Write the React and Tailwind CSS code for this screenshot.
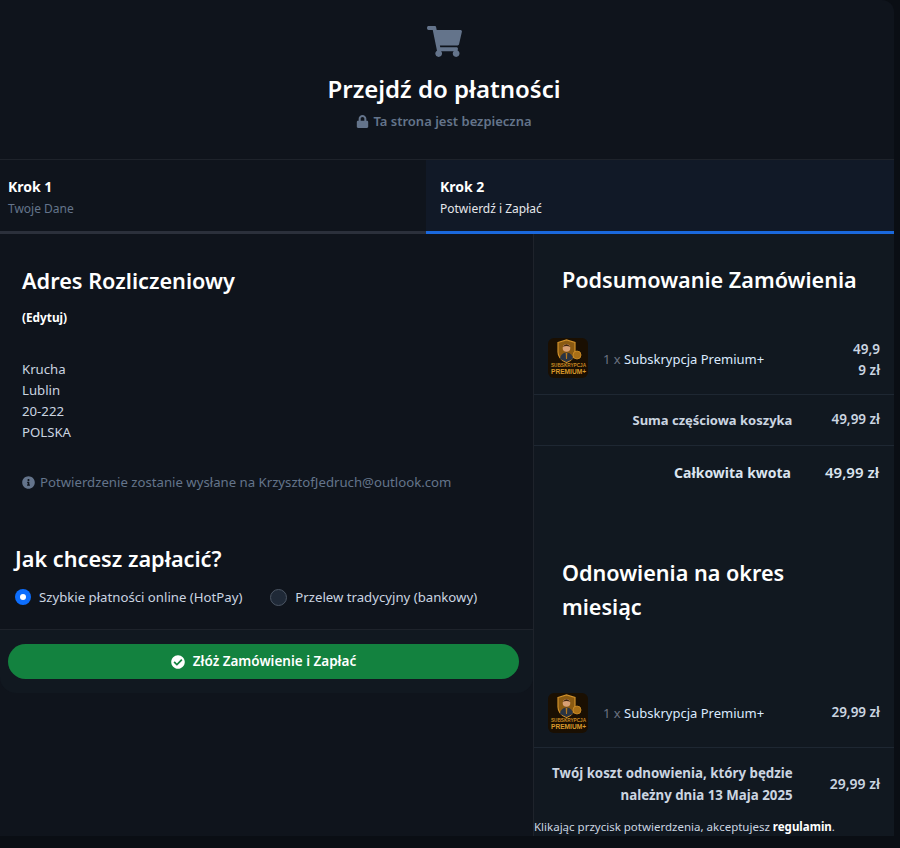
import React from "react";
import { FaShoppingCart, FaLock, FaInfoCircle, FaCheckCircle } from "react-icons/fa";

function Thumb() {
  return (
    <div className="w-10 h-10 rounded-md bg-[#1a0f02] overflow-hidden shrink-0">
      <svg viewBox="0 0 40 40" width="40" height="40">
        <path d="M10 4.5 L18.5 2 L27 4.5 V14 Q27 21 18.5 24.5 Q10 21 10 14 Z" fill="#8a5a12" stroke="#d0902a" strokeWidth="1.2" />
        <circle cx="18.5" cy="10" r="3.8" fill="#d9a074" />
        <path d="M14.5 9 Q18.5 3.5 22.5 9 Q18.5 7 14.5 9Z" fill="#3f2410" />
        <path d="M12 21 Q12.5 15 18.5 14.5 Q24.5 15 25 21 L18.5 24Z" fill="#2a3443" />
        <path d="M17.7 15 h1.6 l-.3 6 h-1Z" fill="#b9791c" />
        <circle cx="29" cy="17" r="4" fill="#a86f17" stroke="#d0902a" strokeWidth="0.8" />
        <text x="3" y="28.5" textLength="35" lengthAdjust="spacingAndGlyphs" fontSize="4.6" fontWeight="700" fill="#c98a22" fontFamily="Liberation Sans, sans-serif">SUBSKRYPCJA</text>
        <text x="3" y="35.5" textLength="35" lengthAdjust="spacingAndGlyphs" fontSize="6.4" fontWeight="700" fill="#d89a2b" fontFamily="Liberation Sans, sans-serif">PREMIUM+</text>
      </svg>
    </div>
  );
}

export default function App() {
  return (
    <div className="w-[900px] h-[848px] overflow-hidden bg-[#0a0e14] text-white text-sm font-['Noto_Sans','Open_Sans',sans-serif]">
      <div className="w-[894px] h-[836px] overflow-hidden rounded-tr-xl bg-[#0f141c]">
        <header className="h-[160px] border-b border-[#1e232b] flex flex-col items-center pt-[26px] pr-[6px]">
          <FaShoppingCart className="text-[#64748b] w-[35px] h-[31px]" />
          <h1 className="mt-[16px] text-2xl leading-8 font-semibold">Przejdź do płatności</h1>
          <p className="mt-[6px] flex items-center gap-1 text-[13px] leading-5 font-semibold text-[#64748b]">
            <FaLock className="w-[13px] h-[13px]" /> Ta strona jest bezpieczna
          </p>
        </header>

        <div className="flex h-[74px]">
          <div className="w-[426px] border-b-[3px] border-[#2b303b] pl-2 pt-[17px]">
            <div className="text-sm leading-5 font-bold">Krok 1</div>
            <div className="mt-[4px] text-xs leading-4 text-[#64748b]">Twoje Dane</div>
          </div>
          <div className="flex-1 border-b-[3px] border-[#1a68dc] bg-[#111927] pl-[14px] pt-[17px]">
            <div className="text-sm leading-5 font-bold">Krok 2</div>
            <div className="mt-[4px] text-xs leading-4 text-[#e5e7eb]">Potwierdź i Zapłać</div>
          </div>
        </div>

        <div className="flex items-start">
          <section className="w-[533px] shrink-0">
            <div className="pl-[22px] pt-[33px]">
              <h2 className="text-[21.7px] leading-7 font-semibold">Adres Rozliczeniowy</h2>
              <div className="mt-[14px] text-[11.8px] leading-4 font-bold">(Edytuj)</div>
              <div className="mt-[34px] text-[13.2px] leading-[21px] text-[#cbd5e1]">
                <div>Krucha</div>
                <div>Lublin</div>
                <div>20-222</div>
                <div>POLSKA</div>
              </div>
              <p className="mt-[29px] flex items-center gap-[5px] text-[13.2px] leading-5 text-[#64748b]">
                <FaInfoCircle className="w-[13px] h-[13px]" /> Potwierdzenie zostanie wysłane na KrzysztofJedruch@outlook.com
              </p>
            </div>
            <div className="pl-[15px] pt-[53px] pb-[22px]">
              <h3 className="text-[21.7px] leading-7 font-semibold">Jak chcesz zapłacić?</h3>
              <div className="mt-[14px] flex items-center text-[13.2px] leading-5 text-[#cbd5e1]">
                <span className="w-4 h-4 rounded-full bg-[#0d6efd] flex items-center justify-center mr-2">
                  <span className="w-[6px] h-[6px] rounded-full bg-white" />
                </span>
                <span>Szybkie płatności online (HotPay)</span>
                <span className="w-[17px] h-[17px] rounded-full bg-[#1f2937] border border-[#4b5563] ml-7 mr-2" />
                <span>Przelew tradycyjny (bankowy)</span>
              </div>
            </div>
            <div className="h-[64px] border-t border-[#1e232b] bg-[#111820] rounded-b-2xl pt-[14px] pl-2 pr-[14px]">
              <button className="w-full h-[35px] rounded-full bg-[#13823f] flex items-center justify-center gap-2 text-[13.5px] font-semibold">
                <FaCheckCircle className="w-[14px] h-[14px]" /> Złóż Zamówienie i Zapłać
              </button>
            </div>
          </section>

          <aside className="flex-1 border-l border-[#1e232b] bg-[#111820] h-[602px] overflow-hidden">
            <h2 className="pl-7 pt-[32px] text-[21.6px] leading-7 font-semibold">Podsumowanie Zamówienia</h2>
            <div className="mt-[28px] h-[73px] border-b border-[#1e2732] flex items-center pl-[14px] pr-[14px]">
              <Thumb />
              <div className="ml-[15px] pt-[2px] flex-1 text-[13px] text-[#dbeafe]"><span className="text-[#6b7280]">1 x </span>Subskrypcja Premium+</div>
              <div className="w-[32px] pt-[4px] text-right text-[13.5px] leading-[21px] font-semibold text-[#cbd5e1] break-all">49,99 zł</div>
            </div>
            <div className="h-[51px] border-b border-[#1e2732] flex items-center justify-end pr-[14px] text-[13.5px] font-semibold text-[#cbd5e1]">
              <span className="text-[13px] font-bold">Suma częściowa koszyka</span>
              <span className="ml-[39px]">49,99 zł</span>
            </div>
            <div className="h-[54px] flex items-center justify-end pr-[15px] text-[15px] font-semibold text-[#dbe4ef]">
              <span className="text-sm font-bold">Całkowita kwota</span>
              <span className="ml-[34px]">49,99 zł</span>
            </div>
            <h2 className="pl-7 pt-[56px] pr-10 text-[21.6px] leading-[34px] font-semibold">Odnowienia na okres miesiąc</h2>
            <div className="mt-[55px] h-[69px] border-b border-[#1e2732] flex items-center pl-[14px] pr-[14px]">
              <Thumb />
              <div className="ml-[15px] flex-1 text-[13px] text-[#dbeafe]"><span className="text-[#6b7280]">1 x </span>Subskrypcja Premium+</div>
              <div className="text-[13.5px] font-semibold text-[#cbd5e1]">29,99 zł</div>
            </div>
            <div className="h-[71px] flex items-center justify-end pr-[14px] text-sm font-semibold text-[#cbd5e1]">
              <span className="w-[260px] text-right text-[13.3px] leading-[22px] font-bold">Twój koszt odnowienia, który będzie należny dnia 13 Maja 2025</span>
              <span className="ml-[37px] shrink-0 whitespace-nowrap">29,99 zł</span>
            </div>
            <p className="text-[11.5px] leading-4 text-[#cbd5e1]">Klikając przycisk potwierdzenia, akceptujesz <b className="text-white">regulamin</b>.</p>
          </aside>
        </div>
      </div>
    </div>
  );
}
